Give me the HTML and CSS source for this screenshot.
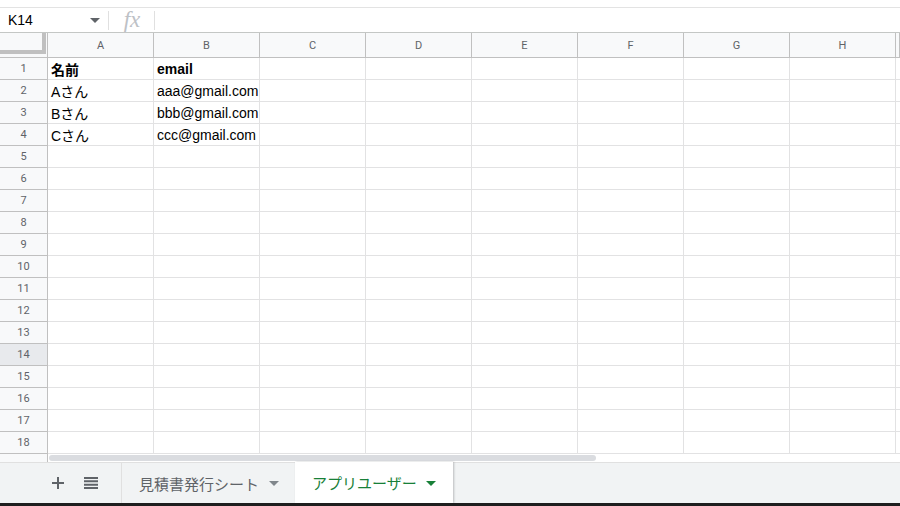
FILE: index.html
```html
<!DOCTYPE html>
<html lang="ja">
<head>
<meta charset="utf-8">
<link rel="stylesheet" href="styles.css">
</head>
<body>
<div class="app">
  <div class="topstrip"></div>
  <div class="formula">
    <div class="namebox"><span class="ref">K14</span><span class="tri"></span></div>
    <div class="sep"></div>
    <div class="fx">fx</div>
    <div class="sep"></div>
  </div>
  <div class="grid">
    <div class="row head">
      <div class="corner"><span class="bar-r"></span><span class="bar-b"></span></div>
      <div class="ch">A</div><div class="ch">B</div><div class="ch">C</div><div class="ch">D</div><div class="ch">E</div><div class="ch">F</div><div class="ch">G</div><div class="ch">H</div><div class="ch last"></div>
    </div>
    <div class="row"><div class="rh">1</div><div class="c b">名前</div><div class="c b">email</div><div class="c"></div><div class="c"></div><div class="c"></div><div class="c"></div><div class="c"></div><div class="c"></div><div class="c last"></div></div>
    <div class="row"><div class="rh">2</div><div class="c">Aさん</div><div class="c">aaa@gmail.com</div><div class="c"></div><div class="c"></div><div class="c"></div><div class="c"></div><div class="c"></div><div class="c"></div><div class="c last"></div></div>
    <div class="row"><div class="rh">3</div><div class="c">Bさん</div><div class="c">bbb@gmail.com</div><div class="c"></div><div class="c"></div><div class="c"></div><div class="c"></div><div class="c"></div><div class="c"></div><div class="c last"></div></div>
    <div class="row"><div class="rh">4</div><div class="c">Cさん</div><div class="c">ccc@gmail.com</div><div class="c"></div><div class="c"></div><div class="c"></div><div class="c"></div><div class="c"></div><div class="c"></div><div class="c last"></div></div>
    <div class="row"><div class="rh">5</div><div class="c"></div><div class="c"></div><div class="c"></div><div class="c"></div><div class="c"></div><div class="c"></div><div class="c"></div><div class="c"></div><div class="c last"></div></div>
    <div class="row"><div class="rh">6</div><div class="c"></div><div class="c"></div><div class="c"></div><div class="c"></div><div class="c"></div><div class="c"></div><div class="c"></div><div class="c"></div><div class="c last"></div></div>
    <div class="row"><div class="rh">7</div><div class="c"></div><div class="c"></div><div class="c"></div><div class="c"></div><div class="c"></div><div class="c"></div><div class="c"></div><div class="c"></div><div class="c last"></div></div>
    <div class="row"><div class="rh">8</div><div class="c"></div><div class="c"></div><div class="c"></div><div class="c"></div><div class="c"></div><div class="c"></div><div class="c"></div><div class="c"></div><div class="c last"></div></div>
    <div class="row"><div class="rh">9</div><div class="c"></div><div class="c"></div><div class="c"></div><div class="c"></div><div class="c"></div><div class="c"></div><div class="c"></div><div class="c"></div><div class="c last"></div></div>
    <div class="row"><div class="rh">10</div><div class="c"></div><div class="c"></div><div class="c"></div><div class="c"></div><div class="c"></div><div class="c"></div><div class="c"></div><div class="c"></div><div class="c last"></div></div>
    <div class="row"><div class="rh">11</div><div class="c"></div><div class="c"></div><div class="c"></div><div class="c"></div><div class="c"></div><div class="c"></div><div class="c"></div><div class="c"></div><div class="c last"></div></div>
    <div class="row"><div class="rh">12</div><div class="c"></div><div class="c"></div><div class="c"></div><div class="c"></div><div class="c"></div><div class="c"></div><div class="c"></div><div class="c"></div><div class="c last"></div></div>
    <div class="row"><div class="rh">13</div><div class="c"></div><div class="c"></div><div class="c"></div><div class="c"></div><div class="c"></div><div class="c"></div><div class="c"></div><div class="c"></div><div class="c last"></div></div>
    <div class="row"><div class="rh sel">14</div><div class="c"></div><div class="c"></div><div class="c"></div><div class="c"></div><div class="c"></div><div class="c"></div><div class="c"></div><div class="c"></div><div class="c last"></div></div>
    <div class="row"><div class="rh">15</div><div class="c"></div><div class="c"></div><div class="c"></div><div class="c"></div><div class="c"></div><div class="c"></div><div class="c"></div><div class="c"></div><div class="c last"></div></div>
    <div class="row"><div class="rh">16</div><div class="c"></div><div class="c"></div><div class="c"></div><div class="c"></div><div class="c"></div><div class="c"></div><div class="c"></div><div class="c"></div><div class="c last"></div></div>
    <div class="row"><div class="rh">17</div><div class="c"></div><div class="c"></div><div class="c"></div><div class="c"></div><div class="c"></div><div class="c"></div><div class="c"></div><div class="c"></div><div class="c last"></div></div>
    <div class="row"><div class="rh">18</div><div class="c"></div><div class="c"></div><div class="c"></div><div class="c"></div><div class="c"></div><div class="c"></div><div class="c"></div><div class="c"></div><div class="c last"></div></div>
    <div class="scrollrow">
      <div class="scroll-rh"></div>
      <div class="scroll-track"><div class="thumb"></div></div>
    </div>
  </div>
  <div class="tabbar">
    <div class="tabtools">
      <svg class="plus" width="12" height="12" viewBox="0 0 12 12"><path d="M5 0h2v5h5v2H7v5H5V7H0V5h5z" fill="#5f6368"/></svg>
      <svg class="list" width="14" height="12" viewBox="0 0 14 12"><path d="M0 0h14v2H0zM0 3.3h14v2H0zM0 6.7h14v2H0zM0 10h14v2H0z" fill="#5f6368"/></svg>
    </div>
    <div class="tab">見積書発行シート<span class="arrow"></span></div>
    <div class="tab active">アプリユーザー<span class="arrow"></span></div>
  </div>
  <div class="bottombar"></div>
</div>
</body>
</html>
```
FILE: styles.css
```css
* { box-sizing: border-box; }
html, body { margin: 0; padding: 0; }
body {
  width: 900px;
  height: 506px;
  overflow: hidden;
  background: #fff;
  font-family: "Liberation Sans", Arial, "Noto Sans CJK JP", sans-serif;
  color: #000;
}
.app { display: flex; flex-direction: column; width: 900px; height: 506px; overflow: hidden; }
.topstrip { height: 8px; border-bottom: 1px solid #e3e3e3; flex: none; }
.formula {
  height: 25px;
  flex: none;
  display: flex;
  align-items: center;
  border-bottom: 1px solid #c4c7c5;
}
.namebox {
  width: 108px;
  display: flex;
  align-items: center;
  justify-content: space-between;
  padding: 0 8px 0 8px;
  font-size: 14px;
  color: #000;
}
.namebox .tri {
  width: 0; height: 0;
  border-left: 5px solid transparent;
  border-right: 5px solid transparent;
  border-top: 5px solid #5f6368;
  margin-top: 1px;
}
.sep { width: 1px; height: 19px; background: #e0e0e0; }
.fx {
  width: 45px;
  text-align: center;
  font-family: "Liberation Serif", "DejaVu Serif", serif;
  font-style: italic;
  font-size: 23px;
  color: #bdc1c6;
  line-height: 22px;
  padding-left: 1px;
}
.grid { flex: none; display: flex; flex-direction: column; width: 900px; overflow: hidden; }
.row { display: flex; height: 22px; flex: none; width: 900px; overflow: hidden; }
.row.head { height: 25px; }
.corner {
  width: 48px; flex: none;
  position: relative;
  background: #f8f9fa;
  border-right: 1px solid #c0c0c0;
  border-bottom: 1px solid #c0c0c0;
}
.corner .bar-r {
  position: absolute; right: 1px; top: 0; width: 4px; height: 21px; background: #c0c0c0;
}
.corner .bar-b {
  position: absolute; left: 0; bottom: 3px; width: 46px; height: 4px; background: #c0c0c0;
}
.ch {
  width: 106px; flex: none;
  background: #f8f9fa;
  border-right: 1px solid #c0c0c0;
  border-bottom: 1px solid #c0c0c0;
  font-family: Roboto, "Liberation Sans", sans-serif;
  font-size: 11px;
  color: #5f6368;
  display: flex; align-items: center; justify-content: center;
}
.rh {
  width: 48px; flex: none;
  background: #f8f9fa;
  border-right: 1px solid #c0c0c0;
  border-bottom: 1px solid #c0c0c0;
  font-family: Roboto, "Liberation Sans", sans-serif;
  font-size: 11px;
  color: #5f6368;
  display: flex; align-items: center; justify-content: center;
}
.rh.sel { background: #e8eaed; }
.c {
  width: 106px; flex: none;
  border-right: 1px solid #e2e2e3;
  border-bottom: 1px solid #e2e2e3;
  font-size: 14px;
  padding: 0 2px 0 3px;
  display: flex; align-items: center;
  white-space: nowrap;
  overflow: hidden;
}
.ch.last, .c.last { width: 4px; }
.c.b { font-weight: bold; }
.scrollrow { display: flex; height: 8px; flex: none; }
.scroll-rh { width: 48px; background: #f8f9fa; border-right: 1px solid #c0c0c0; }
.scroll-track { flex: 1; padding: 1px 0 1px 1px; }
.thumb { width: 547px; height: 6px; border-radius: 3px; background: #dadce0; }
.tabbar {
  height: 41px;
  flex: none;
  background: #f1f3f4;
  border-top: 1px solid #e0e0e0;
  display: flex;
  align-items: stretch;
}
.tabtools {
  width: 122px;
  display: flex;
  align-items: center;
  padding-left: 52px;
  gap: 20px;
  border-right: 1px solid #e0e0e0;
}
.tab {
  display: flex; align-items: center;
  padding: 0 0 0 17px;
  width: 173px;
  font-family: "Noto Sans CJK JP", sans-serif;
  font-size: 15px;
  color: #5f6368;
  white-space: nowrap;
}
.tab .arrow {
  width: 0; height: 0;
  border-left: 5px solid transparent;
  border-right: 5px solid transparent;
  border-top: 5px solid #80868b;
  margin-left: 10px;
  margin-top: 1px;
}
.tab.active {
  width: 158px;
  background: #fff;
  color: #188038;
  box-shadow: 1px 0 2px rgba(60,64,67,0.3);
  margin-top: -1px;
}
.tab.active .arrow { border-top-color: #188038; margin-left: 9px; }
.bottombar { height: 3px; flex: none; background: #1e1e1e; }
```
